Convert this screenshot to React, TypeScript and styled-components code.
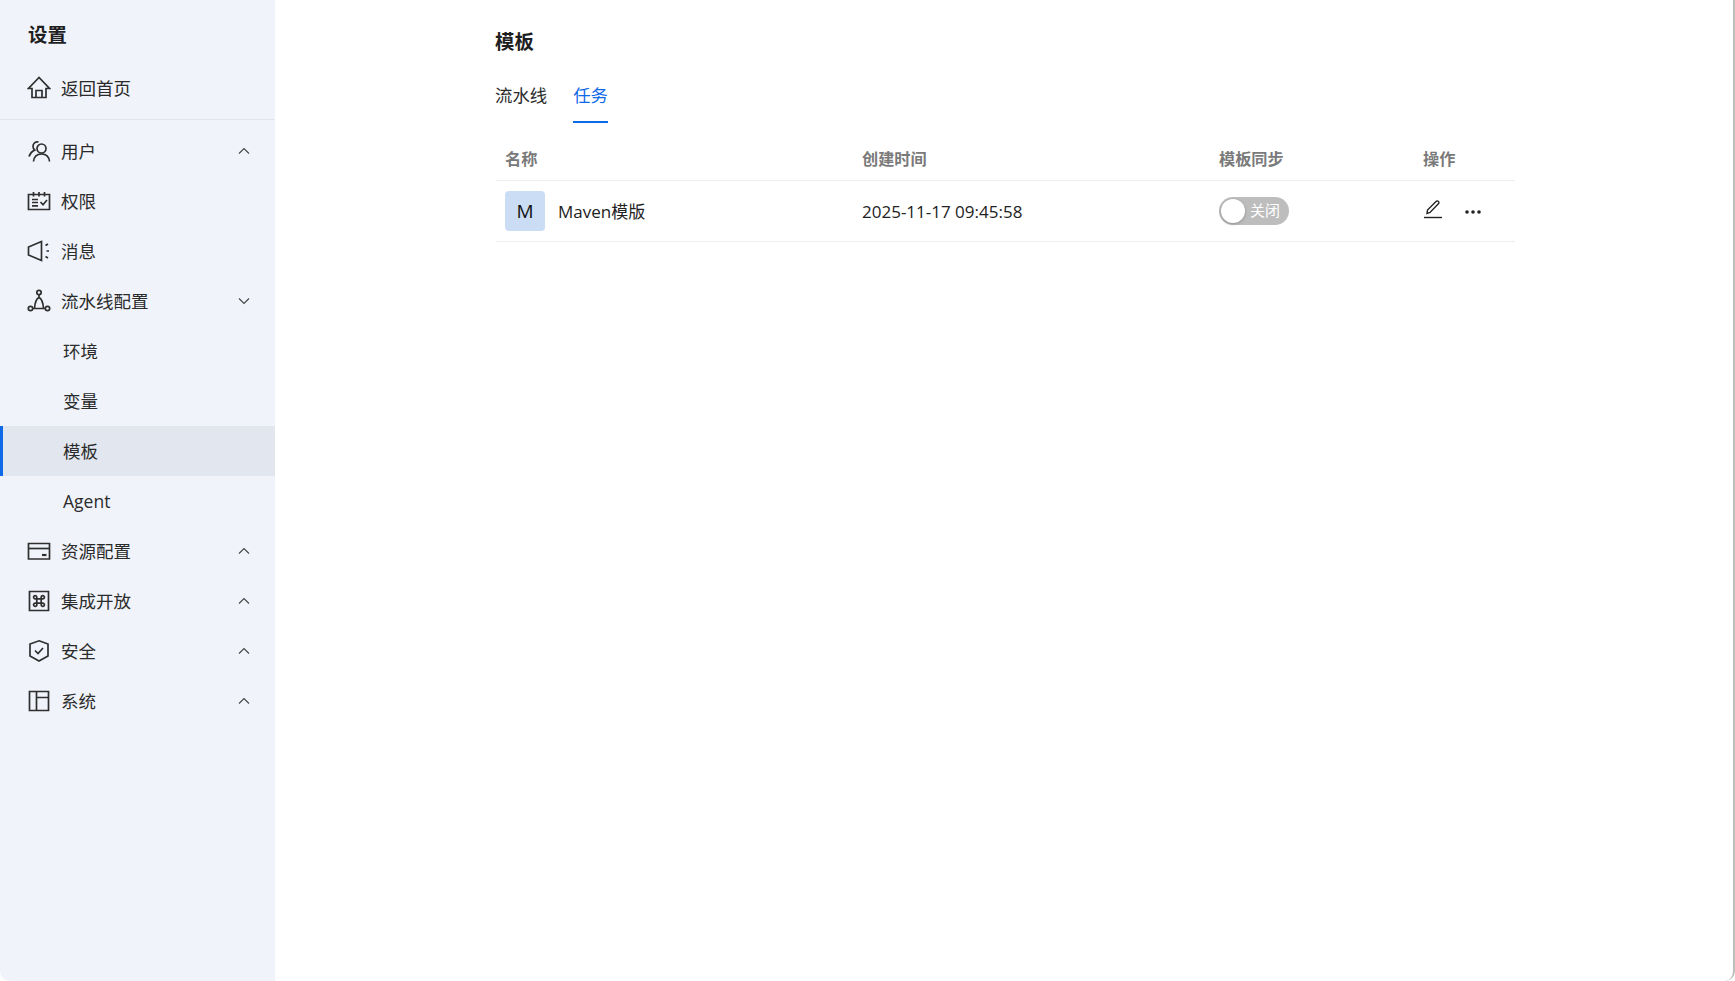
import React from 'react';
import styled, { createGlobalStyle } from 'styled-components';

const GlobalStyle = createGlobalStyle`
  html, body {
    margin: 0;
    padding: 0;
    height: 100%;
    background: #ffffff;
  }
  #root {
    height: 100%;
  }
`;

const fontStack = `"Open Sans", "Noto Sans CJK SC", sans-serif`;

const Page = styled.div`
  display: flex;
  height: 981px;
  overflow: hidden;
  box-sizing: border-box;
  background: #ffffff;
  color: #1f1f1f;
  font-family: ${fontStack};
  border-right: 2px solid #bdbdbd;
  border-radius: 0 0 10px 10px;
`;

const Sidebar = styled.aside`
  width: 275px;
  flex-shrink: 0;
  background: #f0f3fa;
`;

const SideTitle = styled.div`
  height: 63px;
  box-sizing: border-box;
  padding: 22px 0 0 28px;
  line-height: 26px;
  font-size: 19.4px;
  font-weight: 700;
  color: #1f1f1f;
`;

const NavGroup = styled.div`
  padding-bottom: 6px;
  border-bottom: 1px solid #e3e5ea;
  margin-bottom: 6px;
`;

const NavRow = styled.div<{ $active?: boolean }>`
  height: 50px;
  display: flex;
  align-items: center;
  padding-left: 27px;
  padding-right: 25px;
  gap: 10px;
  font-size: 17.5px;
  color: #2b2b2b;
  background: ${(p) => (p.$active ? '#e2e7ef' : 'transparent')};
`;

const SubRow = styled(NavRow)`
  padding-left: ${(p) => (p.$active ? '60px' : '63px')};
  border-left: ${(p) => (p.$active ? '3px solid #0f6ae8' : 'none')};
`;

const NavIcon = styled.svg`
  width: 24px;
  height: 24px;
  flex-shrink: 0;
  fill: none;
  stroke: #2f2f2f;
  stroke-width: 1.7;
`;

const NavLabel = styled.span`
  flex: 1;
  margin-top: -2px;
`;

const Chevron = styled.svg`
  width: 12px;
  height: 8px;
  fill: none;
  stroke: #444444;
  stroke-width: 1.1;
`;

const Main = styled.main`
  flex: 1;
  padding: 0 216px 0 221px;
`;

const PageTitle = styled.h1`
  margin: 0 0 0 -1px;
  height: 83px;
  box-sizing: border-box;
  padding-top: 28px;
  line-height: 28px;
  font-size: 19.4px;
  font-weight: 700;
  color: #1f1f1f;
`;

const Tabs = styled.div`
  display: flex;
  gap: 26px;
  height: 40px;
  margin-left: -1px;
`;

const Tab = styled.div<{ $active?: boolean }>`
  font-size: 17.4px;
  line-height: 24px;
  height: 40px;
  box-sizing: border-box;
  color: ${(p) => (p.$active ? '#0f6ae8' : '#2b2b2b')};
  border-bottom: 2px solid ${(p) => (p.$active ? '#0f6ae8' : 'transparent')};
`;

const TableGrid = styled.div`
  display: grid;
  grid-template-columns: 357px 357px 204px 101px;
`;

const HeadCell = styled.div`
  height: 58px;
  box-sizing: border-box;
  padding: 12px 0 0 9px;
  display: flex;
  align-items: center;
  font-size: 16.2px;
  font-weight: 700;
  color: #7a7a7a;
  border-bottom: 1px solid #eeeeee;
`;

const BodyCell = styled.div`
  height: 61px;
  box-sizing: border-box;
  padding-left: 9px;
  display: flex;
  align-items: center;
  font-size: 17px;
  color: #222222;
  border-bottom: 1px solid #eeeeee;
`;

const Avatar = styled.div`
  width: 40px;
  height: 40px;
  border-radius: 4px;
  background: #cbdcf5;
  color: #111111;
  font-size: 19px;
  display: flex;
  align-items: center;
  justify-content: center;
  margin-right: 13px;
`;

const TemplateName = styled.span`
  margin-top: -2px;
`;

const Toggle = styled.div`
  width: 70px;
  height: 28px;
  border-radius: 14px;
  background: #bdbdbd;
  position: relative;
  color: #ffffff;
  font-size: 15px;
  line-height: 27px;
  padding-left: 31px;
  box-sizing: border-box;
`;

const Knob = styled.span`
  position: absolute;
  left: 2px;
  top: 2px;
  width: 24px;
  height: 24px;
  border-radius: 50%;
  background: #ffffff;
  box-shadow: 0 1px 3px rgba(0, 0, 0, 0.25);
`;

const EditIcon = styled.svg`
  width: 20px;
  height: 24px;
  fill: none;
  stroke: #222222;
  stroke-width: 1.4;
  margin: 0 21px 6px 0;
`;

const Dots = styled.svg`
  width: 18px;
  height: 6px;
  margin-top: 1px;
  fill: #222222;
`;

const icons: Record<string, React.ReactNode> = {
  home: (
    <>
      <path d="M12 1.500 1.500 12.500H5v9h14v-9h3.500z" />
      <path d="M9 21.500V14.500h6v7" />
    </>
  ),
  user: (
    <>
      <circle cx="14.500" cy="9.500" r="4.500" />
      <path d="M6.500 22.500c.5-4.700 3.500-7.500 8-7.500s7.500 2.800 8 7.500" />
      <path d="M11.500 3A4.300 4.300 0 0 0 6 7.500c0 1.500.7 2.700 1.700 3.500C5 12.300 3 14.500 2 17.500" />
    </>
  ),
  perm: (
    <>
      <path d="M1.500 5.500h21v15h-21z" />
      <path d="M6.500 3v4.500M12 3v4.500M17.500 3v4.500" />
      <path d="M5 10.500h6M5 13.500h6M5 16.800h6" />
      <path d="m13.500 13 2.500 2.800 4-4.800" />
    </>
  ),
  message: (
    <>
      <path d="M1.500 8v8l13 5.500V2.500z" />
      <path d="M18.500 6.500l2.500-1.500M19.500 12h2.500M18.500 17.500l2.500 1.500" />
    </>
  ),
  pipeline: (
    <>
      <circle cx="12" cy="3.500" r="2.200" />
      <circle cx="3.500" cy="19.500" r="2.200" />
      <circle cx="20.500" cy="19.500" r="2.200" />
      <path d="M12 5.700V8.500C9.500 9.500 8 13 7.500 19.500M12 8.500c2.500 1 4 4.500 4.500 11M5.700 19.500h12.600" />
    </>
  ),
  resource: (
    <>
      <path d="M1.500 4.500h21v15.500h-21z" />
      <path d="M1.500 9.500h21" />
      <path d="M15 16h4.500" strokeWidth="2.200" />
    </>
  ),
  open: (
    <>
      <path d="M2.500 2.500h19v19h-19z" />
      <path d="M9.800 9.800h4.400v4.400H9.800zM9.800 9.800H8.300a1.600 1.600 0 1 1 1.500-1.600zM14.200 9.800V8.300a1.600 1.600 0 1 1 1.600 1.500zM9.800 14.200v1.500a1.600 1.600 0 1 1-1.600-1.500zM14.200 14.200h1.500a1.600 1.600 0 1 1-1.500 1.600z" />
    </>
  ),
  shield: (
    <>
      <path d="M12 1.800 21 5v12l-9 5-9-5V5z" />
      <path d="m8 11.500 3 3 5-5.500" />
    </>
  ),
  system: (
    <>
      <path d="M2.500 2.500h19v19h-19z" />
      <path d="M9.500 2.500v19M9.500 8.500h12" />
    </>
  ),
};

const Icon = ({ name }: { name: string }) => <NavIcon viewBox="0 0 24 24">{icons[name]}</NavIcon>;

const Arrow = ({ up }: { up?: boolean }) => (
  <Chevron viewBox="0 0 12 8">
    <path d={up ? 'M1 6.500 6 1.500l5 5' : 'M1 1.500l5 5 5-5'} />
  </Chevron>
);

const Item = ({ icon, label, arrow }: { icon: string; label: string; arrow?: 'up' | 'down' }) => (
  <NavRow>
    <Icon name={icon} />
    <NavLabel>{label}</NavLabel>
    {arrow && <Arrow up={arrow === 'up'} />}
  </NavRow>
);

export default function App() {
  return (
    <Page>
      <GlobalStyle />
      <Sidebar>
        <SideTitle>设置</SideTitle>
        <NavGroup>
          <Item icon="home" label="返回首页" />
        </NavGroup>
        <Item icon="user" label="用户" arrow="up" />
        <Item icon="perm" label="权限" />
        <Item icon="message" label="消息" />
        <Item icon="pipeline" label="流水线配置" arrow="down" />
        <SubRow><NavLabel>环境</NavLabel></SubRow>
        <SubRow><NavLabel>变量</NavLabel></SubRow>
        <SubRow $active><NavLabel>模板</NavLabel></SubRow>
        <SubRow>Agent</SubRow>
        <Item icon="resource" label="资源配置" arrow="up" />
        <Item icon="open" label="集成开放" arrow="up" />
        <Item icon="shield" label="安全" arrow="up" />
        <Item icon="system" label="系统" arrow="up" />
      </Sidebar>
      <Main>
        <PageTitle>模板</PageTitle>
        <Tabs>
          <Tab>流水线</Tab>
          <Tab $active>任务</Tab>
        </Tabs>
        <TableGrid>
          <HeadCell>名称</HeadCell>
          <HeadCell>创建时间</HeadCell>
          <HeadCell>模板同步</HeadCell>
          <HeadCell>操作</HeadCell>
          <BodyCell>
            <Avatar>M</Avatar>
            <TemplateName>Maven模版</TemplateName>
          </BodyCell>
          <BodyCell>2025-11-17 09:45:58</BodyCell>
          <BodyCell>
            <Toggle>
              <Knob />
              关闭
            </Toggle>
          </BodyCell>
          <BodyCell>
            <EditIcon viewBox="0 0 20 24">
              <path d="M4 17.500l.5-3.500 8.500-8.500c.8-.8 1.700-.8 2.400 0 .7.7.7 1.600 0 2.300L7 16.500z" />
              <path d="M1 21.500h18" />
            </EditIcon>
            <Dots viewBox="0 0 18 6">
              <circle cx="3" cy="3" r="1.800" />
              <circle cx="9" cy="3" r="1.800" />
              <circle cx="15" cy="3" r="1.800" />
            </Dots>
          </BodyCell>
        </TableGrid>
      </Main>
    </Page>
  );
}
